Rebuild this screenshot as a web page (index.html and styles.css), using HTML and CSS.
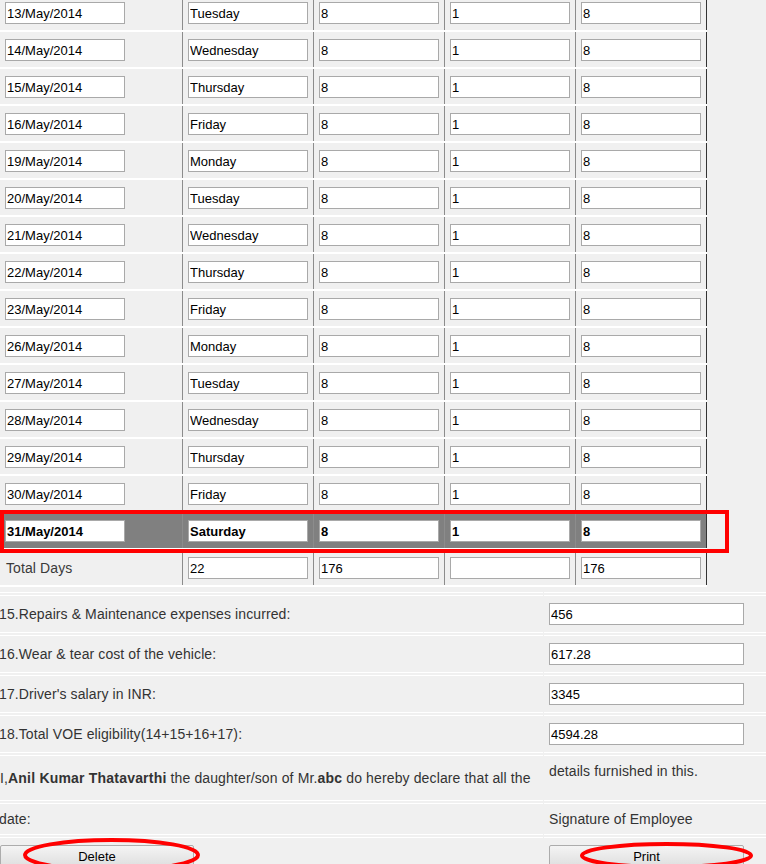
FILE: index.html
```html
<!DOCTYPE html>
<html>
<head>
<meta charset="utf-8">
<title>VOE Timesheet</title>
<link rel="stylesheet" href="styles.css">
</head>
<body>
<div class="page">
  <div class="days">
    <div class="drow"><div class="cell first"><input class="field" value="13/May/2014"></div><div class="cell"><input class="field" value="Tuesday"></div><div class="cell"><input class="field" value="8"></div><div class="cell"><input class="field" value="1"></div><div class="cell last"><input class="field" value="8"></div></div>
    <div class="drow"><div class="cell first"><input class="field" value="14/May/2014"></div><div class="cell"><input class="field" value="Wednesday"></div><div class="cell"><input class="field" value="8"></div><div class="cell"><input class="field" value="1"></div><div class="cell last"><input class="field" value="8"></div></div>
    <div class="drow"><div class="cell first"><input class="field" value="15/May/2014"></div><div class="cell"><input class="field" value="Thursday"></div><div class="cell"><input class="field" value="8"></div><div class="cell"><input class="field" value="1"></div><div class="cell last"><input class="field" value="8"></div></div>
    <div class="drow"><div class="cell first"><input class="field" value="16/May/2014"></div><div class="cell"><input class="field" value="Friday"></div><div class="cell"><input class="field" value="8"></div><div class="cell"><input class="field" value="1"></div><div class="cell last"><input class="field" value="8"></div></div>
    <div class="drow"><div class="cell first"><input class="field" value="19/May/2014"></div><div class="cell"><input class="field" value="Monday"></div><div class="cell"><input class="field" value="8"></div><div class="cell"><input class="field" value="1"></div><div class="cell last"><input class="field" value="8"></div></div>
    <div class="drow"><div class="cell first"><input class="field" value="20/May/2014"></div><div class="cell"><input class="field" value="Tuesday"></div><div class="cell"><input class="field" value="8"></div><div class="cell"><input class="field" value="1"></div><div class="cell last"><input class="field" value="8"></div></div>
    <div class="drow"><div class="cell first"><input class="field" value="21/May/2014"></div><div class="cell"><input class="field" value="Wednesday"></div><div class="cell"><input class="field" value="8"></div><div class="cell"><input class="field" value="1"></div><div class="cell last"><input class="field" value="8"></div></div>
    <div class="drow"><div class="cell first"><input class="field" value="22/May/2014"></div><div class="cell"><input class="field" value="Thursday"></div><div class="cell"><input class="field" value="8"></div><div class="cell"><input class="field" value="1"></div><div class="cell last"><input class="field" value="8"></div></div>
    <div class="drow"><div class="cell first"><input class="field" value="23/May/2014"></div><div class="cell"><input class="field" value="Friday"></div><div class="cell"><input class="field" value="8"></div><div class="cell"><input class="field" value="1"></div><div class="cell last"><input class="field" value="8"></div></div>
    <div class="drow"><div class="cell first"><input class="field" value="26/May/2014"></div><div class="cell"><input class="field" value="Monday"></div><div class="cell"><input class="field" value="8"></div><div class="cell"><input class="field" value="1"></div><div class="cell last"><input class="field" value="8"></div></div>
    <div class="drow"><div class="cell first"><input class="field" value="27/May/2014"></div><div class="cell"><input class="field" value="Tuesday"></div><div class="cell"><input class="field" value="8"></div><div class="cell"><input class="field" value="1"></div><div class="cell last"><input class="field" value="8"></div></div>
    <div class="drow"><div class="cell first"><input class="field" value="28/May/2014"></div><div class="cell"><input class="field" value="Wednesday"></div><div class="cell"><input class="field" value="8"></div><div class="cell"><input class="field" value="1"></div><div class="cell last"><input class="field" value="8"></div></div>
    <div class="drow"><div class="cell first"><input class="field" value="29/May/2014"></div><div class="cell"><input class="field" value="Thursday"></div><div class="cell"><input class="field" value="8"></div><div class="cell"><input class="field" value="1"></div><div class="cell last"><input class="field" value="8"></div></div>
    <div class="drow"><div class="cell first"><input class="field" value="30/May/2014"></div><div class="cell"><input class="field" value="Friday"></div><div class="cell"><input class="field" value="8"></div><div class="cell"><input class="field" value="1"></div><div class="cell last"><input class="field" value="8"></div></div>
    <div class="drow hl"><div class="cell first"><input class="field" value="31/May/2014"></div><div class="cell"><input class="field" value="Saturday"></div><div class="cell"><input class="field" value="8"></div><div class="cell"><input class="field" value="1"></div><div class="cell last"><input class="field" value="8"></div></div>
    <div class="drow"><div class="cell first"><span class="total-label">Total Days</span></div><div class="cell"><input class="field" value="22"></div><div class="cell"><input class="field" value="176"></div><div class="cell"><input class="field" value=""></div><div class="cell last"><input class="field" value="176"></div></div>
  </div>

  <div class="lower">
    <div class="lcell spacer"></div><div class="rcell spacer"></div>

    <div class="lcell">15.Repairs &amp; Maintenance expenses incurred:</div>
    <div class="rcell"><input class="wide" value="456"></div>

    <div class="lcell">16.Wear &amp; tear cost of the vehicle:</div>
    <div class="rcell"><input class="wide" value="617.28"></div>

    <div class="lcell">17.Driver's salary in INR:</div>
    <div class="rcell"><input class="wide" value="3345"></div>

    <div class="lcell">18.Total VOE eligibility(14+15+16+17):</div>
    <div class="rcell"><input class="wide" value="4594.28"></div>

    <div class="lcell decl flush"><span class="decl-text">I,<b>Anil Kumar Thatavarthi</b> the daughter/son of Mr.<b>abc</b> do hereby declare that all the</span></div>
    <div class="rcell decl top">details furnished in this.</div>

    <div class="lcell date">date:</div>
    <div class="rcell date">Signature of Employee</div>

    <div class="lcell btns"><button class="btn del">Delete</button></div>
    <div class="rcell btns"><button class="btn prn">Print</button></div>
  </div>
</div>

<div class="mark-row"></div>
<svg class="marks" width="766" height="864" viewBox="0 0 766 864">
  <ellipse cx="111.5" cy="855" rx="86.5" ry="15" fill="none" stroke="#ff0000" stroke-width="4"/>
  <ellipse cx="666.5" cy="855.5" rx="84.5" ry="11.5" fill="none" stroke="#ff0000" stroke-width="4"/>
</svg>
</body>
</html>
```

FILE: styles.css
```css
html, body {
  margin: 0;
  padding: 0;
}
body {
  background: #f0f0f0;
  font-family: "Liberation Sans", Arial, sans-serif;
  width: 766px;
  height: 864px;
  overflow: hidden;
  position: relative;
  color: #333;
}
.page {
  margin-top: -5px;
}
.days {
  width: 707px;
}
.drow {
  display: flex;
  border-bottom: 2px solid #ffffff;
}
.cell {
  box-sizing: border-box;
  width: 131px;
  height: 35px;
  padding: 7px 0 6px 5px;
  border-right: 1px solid #8c8c8c;
  display: flex;
  align-items: center;
}
.cell.first {
  width: 183px;
}
.cell.last {
  border-right-color: #333333;
}
.drow.hl .cell {
  background: #808080;
}
.drow.hl .field {
  font-weight: bold;
}
.field, .wide {
  box-sizing: border-box;
  width: 120px;
  height: 22px;
  margin: 0;
  padding: 0 1px;
  border: 1px solid #a9a9a9;
  background: #ffffff;
  font-family: "Liberation Sans", Arial, sans-serif;
  font-size: 13px;
  color: #000;
  outline: none;
}
.wide {
  width: 195px;
}
.total-label {
  font-size: 14px;
  color: #3a3a3a;
  padding-left: 1px;
  letter-spacing: 0.1px;
}
.lower {
  margin-top: 5px;
  display: grid;
  grid-template-columns: 543px 222px;
  column-gap: 1px;
  row-gap: 2px;
}
.lcell, .rcell {
  box-sizing: border-box;
  border-top: 1px solid #ffffff;
  border-bottom: 1px solid #ffffff;
  height: 38px;
  display: flex;
  align-items: center;
  font-size: 14px;
  color: #333;
  white-space: nowrap;
  letter-spacing: 0.1px;
}
.lcell {
  padding-left: 0;
  margin-left: -1px;
  overflow: hidden;
}
.rcell {
  padding-left: 5px;
}
.lcell.spacer, .rcell.spacer {
  height: 1px;
  border-top: 0;
}
.decl {
  height: 46px;
}
.lcell.flush {
  margin-left: 0;
}
.decl-text {
  letter-spacing: 0.13px;
}
.decl-text b {
  letter-spacing: 0.2px;
}
.rcell.top {
  align-items: flex-start;
  padding-top: 7px;
}
.date {
  height: 32px;
}
.btns {
  height: 40px;
  align-items: flex-start;
  padding-top: 7px;
}
.lcell.btns {
  margin-left: 0;
}
.btn {
  box-sizing: border-box;
  height: 23px;
  margin: 0;
  padding: 0;
  border: 1px solid #acacac;
  border-radius: 2px;
  background: linear-gradient(#f4f4f4, #dedede);
  font-family: "Liberation Sans", Arial, sans-serif;
  font-size: 13px;
  color: #000;
}
.btn.del {
  width: 194px;
}
.btn.prn {
  width: 195px;
}
.mark-row {
  position: absolute;
  left: 0;
  top: 510px;
  width: 729px;
  height: 43px;
  box-sizing: border-box;
  border: 4px solid #ff0000;
}
.marks {
  position: absolute;
  left: 0;
  top: 0;
  pointer-events: none;
}
```
